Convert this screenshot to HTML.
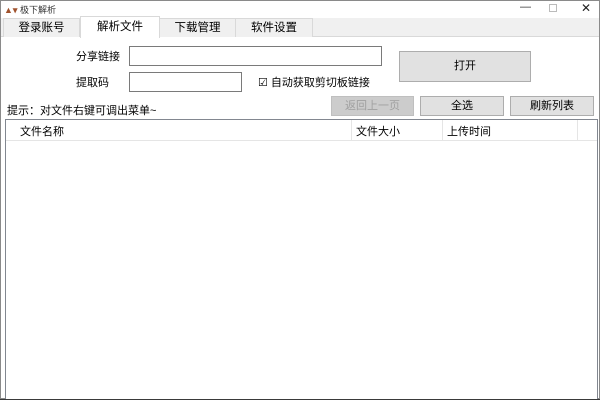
<!DOCTYPE html><html><head><meta charset="utf-8"><style>
*{margin:0;padding:0;box-sizing:border-box}
body{width:600px;height:400px;background:#3a3a3a;font-family:"Liberation Sans","Noto Sans CJK SC",sans-serif;font-size:11px;color:#000;position:relative;overflow:hidden}
.win{position:absolute;left:0;top:0;width:600px;height:399px;background:#fff;border:1px solid #8a8a8a}
.a{position:absolute;white-space:nowrap}
.tabs{position:absolute;left:0;top:17px;width:598px;height:19px;background:#f0f0f0;border-bottom:1px solid #d9d9d9}
.tab{position:absolute;top:0;height:19px;border:1px solid #d9d9d9;border-bottom:none;text-align:center;line-height:19px;background:#f0f0f0;font-size:11.5px}
.inp{position:absolute;border:1px solid #7a7a7a;background:#fff}
.btn{position:absolute;border:1px solid #adadad;background:#e1e1e1;text-align:center}
</style></head><body><div class="win">
<div class="a" style="left:3px;top:2px;font-size:9px;color:#333"><span style="color:#a0522d;font-weight:bold">▲▾</span> 极下解析</div>
<div class="a" style="left:519px;top:0px;font-size:11px;color:#333">—</div>
<div class="a" style="left:548px;top:3px;width:8px;height:8px;border:1px solid #bbb"></div>
<div class="a" style="left:580px;top:0px;font-size:12px;color:#222">✕</div>
<div class="tabs">
<div class="tab" style="left:2px;width:77px">登录账号</div>
<div class="tab" style="left:158px;width:77px">下载管理</div>
<div class="tab" style="left:234px;width:78px">软件设置</div>
<div class="tab" style="left:79px;width:80px;top:-2px;height:22px;background:#fff;line-height:21px">解析文件</div>
</div>
<div class="a" style="left:75px;top:47px">分享链接</div>
<div class="inp" style="left:128px;top:45px;width:253px;height:20px"></div>
<div class="a" style="left:75px;top:73px">提取码</div>
<div class="inp" style="left:128px;top:71px;width:113px;height:20px"></div>
<div class="a" style="left:257px;top:73px">☑ 自动获取剪切板链接</div>
<div class="btn" style="left:398px;top:50px;width:132px;height:31px;line-height:29px">打开</div>
<div class="a" style="left:6px;top:101px">提示：对文件右键可调出菜单~</div>
<div class="btn" style="left:330px;top:95px;width:83px;height:20px;line-height:18px;background:#ccc;border-color:#bfbfbf;color:#a0a0a0">返回上一页</div>
<div class="btn" style="left:419px;top:95px;width:84px;height:20px;line-height:18px">全选</div>
<div class="btn" style="left:509px;top:95px;width:84px;height:20px;line-height:18px">刷新列表</div>
<div class="a" style="left:4px;top:118px;width:593px;height:280px;border:1px solid #828790;border-bottom:none;background:#fff">
<div class="a" style="left:0;top:0;width:591px;height:21px;border-bottom:1px solid #e5e5e5"></div>
<div class="a" style="left:14px;top:3px">文件名称</div>
<div class="a" style="left:345px;top:0;height:21px;border-left:1px solid #e5e5e5"></div>
<div class="a" style="left:350px;top:3px">文件大小</div>
<div class="a" style="left:436px;top:0;height:21px;border-left:1px solid #e5e5e5"></div>
<div class="a" style="left:441px;top:3px">上传时间</div>
<div class="a" style="left:571px;top:0;height:21px;border-left:1px solid #e5e5e5"></div>
</div>
</div></body></html>
